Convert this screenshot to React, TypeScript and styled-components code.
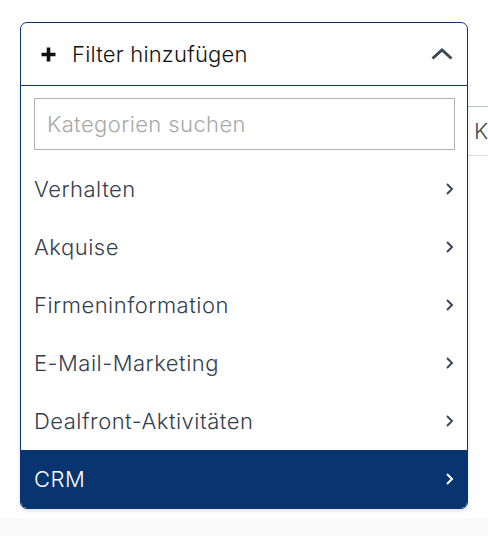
import { useState } from 'react';
import styled, { createGlobalStyle } from 'styled-components';

const GlobalStyle = createGlobalStyle`
    body {
        margin: 0;
        font-family: Inter, "Noto Sans", sans-serif;
        background: #ffffff;
    }
`;

const categories = [
    'Verhalten',
    'Akquise',
    'Firmeninformation',
    'E-Mail-Marketing',
    'Dealfront-Aktivitäten',
    'CRM',
];

const PlusIcon = () => (
    <svg width="15" height="15" viewBox="0 0 15 15">
        <path d="M7.5 0.5v14M0.5 7.5h14" stroke="#111" strokeWidth="3.6" strokeLinecap="butt" />
    </svg>
);

const ChevronUp = () => (
    <svg width="24" height="14" viewBox="0 0 24 14">
        <path d="M2.5 11.5L12 3l9.5 8.5" fill="none" stroke="#3d4857" strokeWidth="3" />
    </svg>
);

const ChevronRight = ({ color }: { color: string }) => (
    <svg width="9" height="14" viewBox="0 0 9 14">
        <path d="M2 2l5 5-5 5" fill="none" stroke={color} strokeWidth="2" />
    </svg>
);

export default function App() {
    const [query, setQuery] = useState('');
    const [active] = useState('CRM');

    const visible = categories.filter((c) => c.toLowerCase().includes(query.toLowerCase()));

    return (
        <>
            <GlobalStyle />
            <Page>
                <Main>
                    <Dropdown>
                        <Header>
                            <HeaderLabel>
                                <PlusIcon />
                                Filter hinzufügen
                            </HeaderLabel>
                            <ChevronUp />
                        </Header>
                        <Menu>
                            <SearchWrap>
                                <SearchInput
                                    value={query}
                                    onChange={(e) => setQuery(e.target.value)}
                                    placeholder="Kategorien suchen"
                                />
                            </SearchWrap>
                            {visible.map((c) => (
                                <Item key={c} active={c === active}>
                                    {c}
                                    <ChevronRight color={c === active ? '#ffffff' : '#3d4857'} />
                                </Item>
                            ))}
                        </Menu>
                    </Dropdown>
                    <SideField>K</SideField>
                </Main>
                <Footer />
            </Page>
        </>
    );
}

const Page = styled.div`
    display: flex;
    flex-direction: column;
    min-height: 100vh;
`;

const Main = styled.div`
    display: flex;
    align-items: flex-start;
    height: 518px;
    padding: 22px 0 0 20px;
    box-sizing: border-box;
`;

const Footer = styled.div`
    flex: 1;
    background: #fafafa;
`;

const Dropdown = styled.div`
    position: relative;
    width: 448px;
    flex-shrink: 0;
    z-index: 2;
`;

const Header = styled.div`
    display: flex;
    align-items: center;
    justify-content: space-between;
    height: 64px;
    box-sizing: border-box;
    padding: 0 13px 0 20px;
    border: 1px solid #0a3570;
    border-radius: 7px 7px 0 0;
    background: #ffffff;
`;

const HeaderLabel = styled.div`
    display: flex;
    align-items: center;
    gap: 16px;
    font-size: 22px;
    font-weight: 300;
    letter-spacing: 0.2px;
    color: #111111;
`;

const Menu = styled.div`
    position: absolute;
    top: 63px;
    left: 0;
    width: 448px;
    box-sizing: border-box;
    border: 1px solid #0a3570;
    border-radius: 0 0 7px 7px;
    background: #ffffff;
    overflow: hidden;
    box-shadow: 0 2px 4px rgba(0, 0, 0, 0.12);
`;

const SearchWrap = styled.div`
    padding: 12px 12px 10px 13px;
`;

const SearchInput = styled.input`
    display: block;
    width: 100%;
    height: 52px;
    box-sizing: border-box;
    border: 1px solid #b0b0b0;
    border-radius: 0;
    padding: 0 12px;
    font-family: Inter, "Noto Sans", sans-serif;
    font-size: 22px;
    font-weight: 300;
    letter-spacing: 0.4px;
    color: #3d4857;
    outline: none;

    &::placeholder {
        color: #a8a8a8;
    }
`;

const Item = styled.div<{ active: boolean }>`
    display: flex;
    align-items: center;
    justify-content: space-between;
    height: 58px;
    padding: 0 13px 0 13px;
    font-size: 22px;
    font-weight: 300;
    letter-spacing: 0.5px;
    color: ${(p) => (p.active ? '#ffffff' : '#333e4d')};
    background: ${(p) => (p.active ? '#08356f' : 'transparent')};
`;

const SideField = styled.div`
    flex: 1;
    margin-top: 84px;
    height: 50px;
    box-sizing: border-box;
    border-top: 1px solid #b9c2cf;
    border-bottom: 1px solid #dde2e8;
    display: flex;
    align-items: center;
    padding-left: 6px;
    font-size: 22px;
    font-weight: 300;
    color: #3d4857;
`;
